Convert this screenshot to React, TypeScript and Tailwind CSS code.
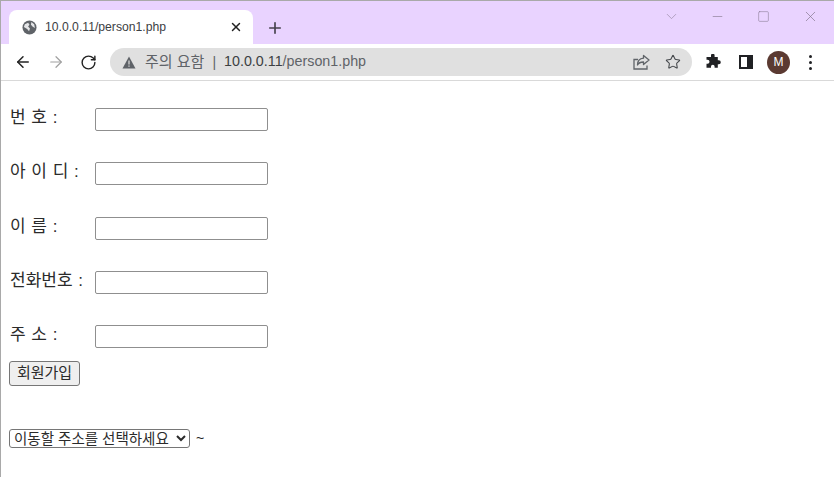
import { ArrowLeft, ArrowRight, ChevronDown, Minus, Plus, RotateCw, Square, Star, X } from 'lucide-react';

const fields = [
  { label: '번 호 :', top: 'mt-[27px]' },
  { label: '아 이 디 :', top: 'mt-[31px]' },
  { label: '이 름 :', top: 'mt-[32px]' },
  { label: '전화번호 :', top: 'mt-[31px]' },
  { label: '주 소 :', top: 'mt-[31px]' },
];

function Field({ label, top }: { label: string; top: string }) {
  return (
    <div className={`${top} flex h-[23px] items-center`}>
      <span className="relative top-[-2px] ml-[1px] w-[85px] whitespace-pre text-[17px] text-[#2b2b2b] [word-spacing:1px]">{label}</span>
      <input className="h-[23px] w-[173px] rounded-[2px] border border-[#8f8f8f] bg-white" />
    </div>
  );
}

export default function App() {
  return (
    <div className="h-[477px] w-[834px] overflow-hidden border-l border-t border-[#a9a9a9] bg-white font-['Liberation_Sans','Noto_Sans_CJK_KR',sans-serif]">
      {/* tab strip */}
      <div className="flex h-[43px] items-end bg-[#e9d3ff] pl-[8px]">
        <div className="flex h-[34px] w-[244px] items-center rounded-t-[8px] bg-white pl-[13px] pr-[10px]">
          <svg width="15" height="15" viewBox="0 0 16 16" className="shrink-0">
            <circle cx="8" cy="8" r="7.5" fill="#5f6368" />
            <path d="M3 4.5 6.5 3 8 5 6.5 7 8.5 9 7.5 12 5.5 9.5 2 7.5ZM10 2l3 2.5.8 4-2.3-1.3L9.5 5Z" fill="#e4e5e7" />
          </svg>
          <span className="ml-[8px] text-[12.2px] text-[#3c4043]">10.0.0.11/person1.php</span>
          <X size={14} strokeWidth={2.5} className="ml-auto text-[#222]" />
        </div>
        <Plus size={18} strokeWidth={2.2} className="mb-[7px] ml-[13px] text-[#45404c]" />
        <div className="mb-[19px] ml-auto flex items-center">
          <ChevronDown size={17} strokeWidth={1} className="text-[#9c8ca8]" />
          <Minus size={15} strokeWidth={1} className="ml-[30px] text-[#85788f]" />
          <Square size={13} strokeWidth={1} className="ml-[32px] text-[#85788f]" />
          <X size={17} strokeWidth={1} className="ml-[32px] mr-[15px] text-[#85788f]" />
        </div>
      </div>
      {/* toolbar */}
      <div className="flex h-[37px] items-center border-b border-[#d9d9d9] bg-white pl-[13px]">
        <ArrowLeft size={18} strokeWidth={2} className="text-[#222]" />
        <ArrowRight size={18} strokeWidth={1.6} className="ml-[15px] text-[#a0a0a0]" />
        <RotateCw size={17} strokeWidth={2} className="ml-[15px] text-[#222]" />
        <div className="ml-[13px] flex h-[28px] w-[582px] items-center rounded-full bg-[#e0e0e0] pl-[12px]">
          <svg width="14" height="13" viewBox="0 0 14 13" className="shrink-0">
            <path d="M7 .5 13.5 12.5H.5Z" fill="#5f6368" />
            <path d="M6.4 4.5h1.2v4H6.4ZM6.4 9.5h1.2v1.2H6.4Z" fill="#e0e0e0" />
          </svg>
          <span className="ml-[9px] text-[15px] text-[#5f6368]">주의 요함</span>
          <span className="ml-[8px] text-[14px] text-[#5f6368]">|</span>
          <span className="ml-[8px] text-[14.3px] text-[#3c4043]">10.0.0.11</span>
          <span className="text-[14.3px] text-[#5f6368]">/person1.php</span>
          <svg width="17" height="16" viewBox="0 0 17 16" fill="none" stroke="#5f6368" strokeWidth="1.3" className="ml-auto shrink-0">
            <path d="M5 5.5H1v9.5h13v-3.5" />
            <path d="M10.5 1.5 16 6l-5.5 4.5V8C7.5 8 5.5 9 4.5 11c0-4 2.5-6.5 6-6.8Z" strokeLinejoin="round" />
          </svg>
          <Star size={16} strokeWidth={1.6} className="ml-[15px] mr-[11px] text-[#45484c]" />
        </div>
        <svg width="16" height="16" viewBox="0 0 16 16" className="ml-[13px] shrink-0">
          <path d="M6 1.5a1.8 1.8 0 0 1 3.6 0V3h3.2v3.2h1a2 2 0 0 1 0 4h-1v3.6H9.6v-1.2a1.8 1.8 0 0 0-3.6 0v1.2H1.5v-4h1a2 2 0 0 0 0-4h-1V3H6Z" fill="#202124" />
        </svg>
        <svg width="14" height="14" viewBox="0 0 14 14" className="ml-[18px] shrink-0">
          <path d="M0 0h14v14H0ZM2 2v10h6V2Z" fill="#202124" fillRule="evenodd" />
        </svg>
        <div className="ml-[14px] flex h-[23px] w-[23px] shrink-0 items-center justify-center rounded-full bg-[#5b3a32] text-[12px] text-white">M</div>
        <div className="ml-[19px] flex flex-col gap-[3px]">
          <span className="h-[3px] w-[3px] rounded-full bg-[#202124]" />
          <span className="h-[3px] w-[3px] rounded-full bg-[#202124]" />
          <span className="h-[3px] w-[3px] rounded-full bg-[#202124]" />
        </div>
      </div>
      {/* page */}
      <div className="pl-[8px]">
        {fields.map((f) => (
          <Field key={f.label} label={f.label} top={f.top} />
        ))}
        <button className="mt-[13px] block h-[25px] w-[71px] rounded-[3px] border border-[#767676] bg-[#efefef] text-[15px] text-[#2b2b2b]">회원가입</button>
        <div className="mt-[42px] flex items-center">
          <select className="h-[19px] w-[181px] rounded-[3px] border border-[#767676] bg-white text-[14.5px] leading-none text-[#2b2b2b]">
            <option>이동할 주소를 선택하세요</option>
          </select>
          <span className="ml-[6px] text-[14px] text-[#222]">~</span>
        </div>
      </div>
    </div>
  );
}
